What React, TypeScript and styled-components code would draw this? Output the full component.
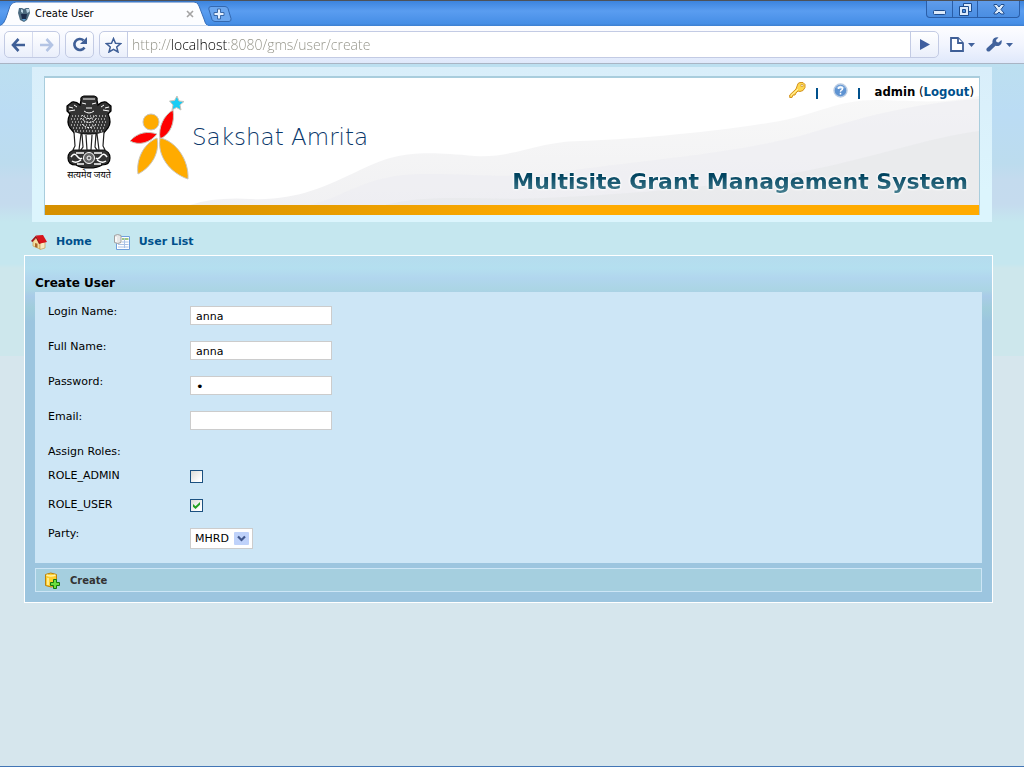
import React, { useState } from "react";
import styled, { createGlobalStyle } from "styled-components";

const GlobalStyle = createGlobalStyle`
  * { box-sizing: border-box; }
  body {
    margin: 0;
    font-family: Verdana, "DejaVu Sans", sans-serif;
    font-size: 11px;
    line-height: 16px;
    color: #000;
  }
  button, input, select { font: inherit; color: inherit; margin: 0; }
  svg { display: block; }
`;

const Window = styled.div`
  display: flex;
  flex-direction: column;
  min-height: 100vh;
  border-bottom: 1px solid #4275b5;
`;

/* Browser chrome */

const TitleBar = styled.header`
  display: flex;
  justify-content: space-between;
  height: 26px;
  border-top: 1px solid #4d5158;
  background: linear-gradient(#3c84dd, #5a9df0 40%, #468ee6 90%, #3d7fd0);
`;

const Tabs = styled.div`
  display: flex;
  align-items: flex-start;
`;

const Tab = styled.div`
  position: relative;
  display: flex;
  align-items: center;
  gap: 4px;
  width: 208px;
  height: 26px;
  padding: 0 14px 0 17px;
  font-family: Tahoma, "DejaVu Sans Condensed", sans-serif;
`;

const TabShape = styled.svg`
  position: absolute;
  inset: 0;
  z-index: 0;
`;

const TabTitle = styled.span`
  position: relative;
  flex: 1;
`;

const TabIcon = styled.span`
  position: relative;
`;

const PlainButton = styled.button`
  position: relative;
  display: flex;
  align-items: center;
  justify-content: center;
  padding: 0;
  border: 0;
  background: none;
`;

const NewTab = styled(PlainButton)`
  margin-top: 5px;
`;

const WindowControls = styled.div`
  display: flex;
  height: 17px;
  margin-right: 4px;
  border: 1px solid #2a5ea8;
  border-top: 0;
  border-radius: 0 0 4px 4px;
  background: linear-gradient(#5f9ceb, #4a8ee2);
`;

const ControlButton = styled(PlainButton)<{ $wide?: boolean }>`
  width: ${(p) => (p.$wide ? 42 : 25)}px;
  & + & { border-left: 1px solid #2a5ea8; }
`;

const Toolbar = styled.div`
  display: flex;
  align-items: center;
  height: 38px;
  padding: 0 6px 0 4px;
  background: linear-gradient(#fdfdff, #f2f5fe 50%, #dfe8fb);
  border-bottom: 1px solid #a9b4c4;
`;

const ButtonGroup = styled.div`
  display: flex;
  height: 27px;
  margin-right: 5px;
  border: 1px solid #c3cbe4;
  border-radius: 5px;
  background: linear-gradient(#fff, #eaeffb);
  overflow: hidden;
`;

const ToolButton = styled(PlainButton)<{ $ruled?: boolean }>`
  width: 27px;
  ${(p) => p.$ruled && "border-left: 1px solid #d5dbee;"}
`;

const AddressGroup = styled(ButtonGroup)`
  flex: 1;
`;

/* The host name is black, the rest of the address grey. */
const Address = styled.input`
  flex: 1;
  min-width: 0;
  padding: 0 4px;
  border: 0;
  border-left: 1px solid #c3cbe4;
  border-right: 1px solid #c3cbe4;
  outline: 0;
  font: 300 14px "Open Sans", Tahoma, sans-serif;
  color: transparent;
  caret-color: #000;
  background-image:
    linear-gradient(90deg, #8f8f84 43px, #000 43px, #000 99px, #8f8f84 99px),
    linear-gradient(#fff, #fff);
  background-clip: text, padding-box;
`;

const MenuButton = styled(PlainButton)`
  width: 37px;
  gap: 4px;
`;

/* Page */

const Page = styled.main`
  flex: 1;
  background: linear-gradient(
    #bcdff0 0, #bbdcf4 50px, #bcdcee 100px, #c4dbee 115px, #c5dbee 140px, #c5e7ef 158px, #c5e7ef 200px,
    #cde7ec 204px, #cde7ec 292px, #d6e6ed 292px
  );
`;

const HeaderFrame = styled.div`
  margin: 0 32px;
  padding: 11px 13px 7px;
  background: linear-gradient(#d9eefa, #dcf5fd 80%);
  border-top: 3px solid #bcdff0;
`;

const Banner = styled.div`
  position: relative;
  display: flex;
  justify-content: space-between;
  height: 137px;
  background: #fff;
  border-bottom: 10px solid;
  border-image: linear-gradient(90deg, #d69000, #d99400 15%, #ffab00 55%) 1;
  box-shadow: 0 -1px 0 1px #a9cddd;
`;

const Waves = styled.svg`
  position: absolute;
  inset: 0;
  width: 100%;
  height: 100%;
`;

const Brand = styled.div`
  position: relative;
  display: flex;
  padding: 17px 0 0 19px;
`;

const Emblem = styled.div`
  width: 50px;
  text-align: center;
  font: 400 9px/12px "Noto Sans", "DejaVu Sans", sans-serif;
  white-space: nowrap;
`;

const BrandFigure = styled.svg`
  margin-left: 16px;
`;

const BrandName = styled.span`
  padding-top: 28px;
  font: 200 23px/28px "DejaVu Sans Light", "DejaVu Sans", sans-serif;
  color: #0a386a;
`;

const BannerSide = styled.div`
  position: relative;
  display: flex;
  flex-direction: column;
  justify-content: space-between;
  align-items: flex-end;
  padding: 2px 5px 9px 0;
`;

const Account = styled.div`
  display: flex;
  align-items: center;
  height: 24px;
  font: 13px/16px "DejaVu Sans Condensed", Tahoma, sans-serif;
`;

const IconLink = styled.a`
  padding-bottom: 4px;
`;

const Divider = styled.span`
  width: 2px;
  height: 11px;
  margin: 2px 15px 0 10px;
  background: #00508c;
`;

const User = styled.span`
  white-space: pre;
`;

const Link = styled.a`
  color: #00508c;
  font-weight: 700;
  text-decoration: none;
`;

const SystemName = styled.h1`
  margin: 0;
  padding-right: 6px;
  font: 700 22px/28px "DejaVu Sans", Verdana, sans-serif;
  white-space: nowrap;
  color: transparent;
  background: linear-gradient(#00435f 25%, #4d8494 95%);
  background-clip: text;
  filter: drop-shadow(0 0 1px #fff) drop-shadow(0 0 1px #fff);
`;

const Nav = styled.nav`
  display: flex;
  gap: 22px;
  height: 33px;
  padding: 6px 31px 0;
  align-items: center;
`;

const NavLink = styled(Link)`
  display: flex;
  align-items: center;
  gap: 9px;
`;

const Panel = styled.form`
  margin: 0 31px 0 24px;
  padding: 0 10px 10px;
  border: 1px solid #fff;
  background: linear-gradient(#b5dcee, #b4dfef 12px, #b1d6ee 22px, #abd5e4 34px, #a9cbe8 40px, #a0cddb 52px, #9cc5df 66px);
`;

const PanelTitle = styled.h2`
  margin: 0;
  padding: 19px 0 1px;
  font-size: 12px;
  line-height: 16px;
`;

const Fields = styled.div`
  padding: 12px 13px 0;
  background: #cde6f6;
`;

const Row = styled.div<{ $height: number }>`
  display: grid;
  grid-template-columns: 142px 1fr;
  align-items: start;
  justify-items: start;
  min-height: ${(p) => p.$height}px;
`;

const Field = styled.div`
  position: relative;
  margin-top: 2px;
`;

const TextInput = styled.input`
  display: block;
  width: 142px;
  height: 19px;
  padding: 1px 5px 0;
  border: 1px solid #ccc;
  background: #fff;
  outline: 0;
`;

const PasswordInput = styled(TextInput)`
  font-size: 13px;
`;

const Check = styled.input`
  appearance: none;
  display: block;
  width: 13px;
  height: 13px;
  border: 1px solid #1c5180;
  background: linear-gradient(135deg, #dcdcd7, #fff 80%);
  &:checked::after {
    content: "";
    display: block;
    width: 7px;
    height: 7px;
    margin: 2px;
    background: #21a121;
    clip-path: polygon(0 28%, 36% 62%, 100% 0, 100% 40%, 36% 100%, 0 68%);
  }
`;

const Select = styled.select`
  appearance: none;
  display: block;
  width: 63px;
  height: 21px;
  padding: 1px 20px 0 4px;
  border: 1px solid #ccc;
  border-radius: 0;
  background: #fff;
`;

const SelectArrow = styled.svg`
  position: absolute;
  top: 4px;
  right: 4px;
  pointer-events: none;
`;

const Actions = styled.div`
  display: flex;
  margin-top: 5px;
  height: 24px;
  padding-left: 8px;
  border: 1px solid #cde6f6;
  background: #a5cfdf;
`;

const CreateButton = styled(PlainButton)`
  gap: 9px;
  padding-top: 1px;
  font-size: 10px;
  font-weight: 700;
  color: #333;
`;

function Arrow({ color, back }: { color: string; back?: boolean }) {
  return (
    <svg width="15" height="14" viewBox="0 0 15 14" fill="none" stroke={color} strokeWidth="2.6">
      {back ? <path d="M7.5 1 2 7l5.500 6M2.500 7H14" /> : <path d="M7.500 1 13 7l-5.500 6M12.500 7H1" />}
    </svg>
  );
}

function Caret() {
  return (
    <svg width="7" height="4" viewBox="0 0 7 4"><path d="M0 0h7L3.500 4z" fill="#41629c" /></svg>
  );
}

function EmblemDrawing() {
  return (
    <svg width="50" height="74" viewBox="0 0 50 74">
      <g fill="#333" stroke="#000" strokeWidth="1.200">
        <path d="M17 5q-1-3 3-4h10q4 1 3 4l1 5q4-4 8-3l5 4v5l-3 3q4 8 0 14l-5 6H11l-5-6q-4-6 0-14l-3-3v-5l5-4q4-1 8 3z" />
        <path d="M4 63q0-7 7-8h28q7 1 7 8t-8 7q-4 3-13 3t-13-3q-8 0-8-7z" />
      </g>
      <g stroke="#fff" fill="none" strokeWidth="1">
        <path d="M19 4h12M18 8l4 1m6 0 4-1M22 13h6M20 16q5 4 10 0M5 12l4 1M5 16l6-1M41 13l4-1M39 15l6 1M10 10l3 2M40 10l-3 2" />
        <path strokeDasharray="1 2" d="M8 21h34M7 24h36M8 27h34M7 30h36M9 33h32M10 36h30" />
        <path strokeDasharray="2 1" d="M18 20q7 7 14 0M17 23q8 9 16 0M18 29q7 7 14 0" />
        <circle cx="25" cy="63" r="5.500" fill="#666" /><circle cx="25" cy="63" r="2" />
        <path d="M7 62q3-5 6-1t5 2M8 66q4 3 9-1M43 62q-3-5-6-1t-5 2M42 66q-4 3-9-1M12 58h8M30 58h8M13 69h7M30 69h7" strokeWidth="1.500" />
      </g>
      <g fill="#fff" stroke="#222" strokeWidth="1.200">
        <path d="M10 37l1 14-2 4h6l2-16M18 39l1 13-2 3h6l-1-15M28 40l-1 15h6l-2-3 1-13M33 39l2 16h6l-2-4 1-14" />
      </g>
    </svg>
  );
}

function TextRow(props: { id: string; label: string; value?: string; password?: boolean }) {
  const Input = props.password ? PasswordInput : TextInput;
  return (
    <Row $height={35}>
      <label htmlFor={props.id}>{props.label}</label>
      <Field>
        <Input id={props.id} type={props.password ? "password" : "text"} defaultValue={props.value} />
      </Field>
    </Row>
  );
}

function RoleRow({ id, initial }: { id: string; initial: boolean }) {
  const [checked, setChecked] = useState(initial);
  return (
    <Row $height={29}>
      <label htmlFor={id}>{id}</label>
      <Field>
        <Check id={id} type="checkbox" checked={checked} onChange={(e) => setChecked(e.target.checked)} />
      </Field>
    </Row>
  );
}

function BrowserChrome() {
  return (
    <>
      <TitleBar>
        <Tabs>
          <Tab>
            <TabShape width="208" height="25" viewBox="0 0 208 25">
              <path d="M0 25Q4 23 6 17L10 5q2-4 6-4h178q4 0 5 4l5 13q1 5 4 7z" fill="#fcfdff" stroke="#3a6fb8" strokeWidth="1" />
              <path d="M1 24.500h207V25H0z" fill="#fcfdff" />
            </TabShape>
            <TabIcon>
              <svg width="14" height="15" viewBox="0 0 14 15">
                <path d="M2 1h3l2 1 2-1h3l1 5-3 7-3 2-4-2-2-7z" fill="#4b6a80" />
                <path d="M4 2v3l2 1V3zM9 2l1 4 2-1V2z" fill="#b9d3e4" />
                <path d="M4 7h6l-1 5H5z" fill="#1b2c4c" /><path d="M5 12h4l-2 2z" fill="#5aa0d8" />
              </svg>
            </TabIcon>
            <TabTitle>Create User</TabTitle>
            <PlainButton aria-label="Close tab">
              <svg width="8" height="8" viewBox="0 0 8 8"><path d="M1 1l6 6M7 1 1 7" stroke="#a3a3a3" strokeWidth="1.600" /></svg>
            </PlainButton>
          </Tab>
          <NewTab aria-label="New tab">
            <svg width="24" height="16" viewBox="0 0 24 16">
              <path d="M3 .5h14q2 0 3 2l3 10q.5 3-2 3H7q-2 0-3-2L.8 3Q.5.500 3 .500z" fill="#6ba6ee" stroke="#3368b0" />
              <path d="M9.500 3h3v3.500H16v3h-3.500V13h-3V9.500H6v-3h3.500z" fill="#e6f0fc" stroke="#3968a8" />
            </svg>
          </NewTab>
        </Tabs>
        <WindowControls>
          <ControlButton aria-label="Minimize">
            <svg width="13" height="12" viewBox="0 0 13 12"><rect x=".5" y="7.500" width="12" height="4" rx="1" fill="#dceafa" stroke="#1e4d8f" /></svg>
          </ControlButton>
          <ControlButton aria-label="Restore">
            <svg width="13" height="13" viewBox="0 0 13 13" fill="#dceafa" stroke="#1e4d8f">
              <path d="M4.500.500h8v8h-8z" /><path d="M.5 3.500h9v9h-9z" /><path d="M3.500 6.500h3v3h-3z" fill="#4a8ee2" />
            </svg>
          </ControlButton>
          <ControlButton aria-label="Close" $wide>
            <svg width="12" height="11" viewBox="0 0 12 11">
              <path d="M1 .5h3l2 2.500L8 .5h3v1L8 5.500l3 3.500v1H8L6 8l-2 2H1V9l3-3.500-3-4z" fill="#dceafa" stroke="#1e4d8f" />
            </svg>
          </ControlButton>
        </WindowControls>
      </TitleBar>
      <Toolbar>
        <ButtonGroup>
          <ToolButton aria-label="Back"><Arrow back color="#3f5f97" /></ToolButton>
          <ToolButton aria-label="Forward" $ruled><Arrow color="#b3c4e4" /></ToolButton>
        </ButtonGroup>
        <ButtonGroup>
          <ToolButton aria-label="Reload">
            <svg width="16" height="15" viewBox="0 0 16 15">
              <path d="M12.500 10.500A5.500 5.500 0 1 1 11.500 3.300" fill="none" stroke="#3f5f97" strokeWidth="2.600" />
              <path d="M15 0v7H8z" fill="#3f5f97" />
            </svg>
          </ToolButton>
        </ButtonGroup>
        <AddressGroup>
          <ToolButton aria-label="Bookmark this page">
            <svg width="17" height="16" viewBox="0 0 17 16">
              <path d="M8.500 1.500l2 4.700 5.200.4-4 3.400 1.300 5-4.500-2.700L4 15l1.300-5-4-3.400 5.200-.4z" fill="#f7f9fe" stroke="#3f5f97" strokeWidth="1.500" />
            </svg>
          </ToolButton>
          <Address aria-label="Address" defaultValue="http://localhost:8080/gms/user/create" />
          <ToolButton aria-label="Go">
            <svg width="10" height="11" viewBox="0 0 10 11"><path d="M0 0v11l10-5.500z" fill="#3f5f9f" /></svg>
          </ToolButton>
        </AddressGroup>
        <MenuButton aria-label="Page menu">
          <svg width="14" height="15" viewBox="0 0 14 15" fill="#fff" stroke="#3f5f97" strokeWidth="1.800">
            <path d="M1 1h7l5 5v8H1z" /><path d="M8 1v5h5" />
          </svg>
          <Caret />
        </MenuButton>
        <MenuButton aria-label="Tools menu">
          <svg width="16" height="15" viewBox="0 0 16 15">
            <path d="M12.500.500 10 3l.5 2 2 .5L15.500 3q1 4-2 5.500-2 1-4 .2L4 14q-1.500 1.200-3 0-1.300-1.500 0-3l5.500-5Q6 3 8 1.300 10 0 12.500.500z" fill="#41629c" />
          </svg>
          <Caret />
        </MenuButton>
      </Toolbar>
    </>
  );
}

export default function App() {
  return (
    <Window>
      <GlobalStyle />
      <BrowserChrome />
      <Page>
        <HeaderFrame>
          <Banner>
            <Waves viewBox="0 0 934 127" preserveAspectRatio="none">
              <defs>
                <linearGradient id="haze" x1="0" x2="0" y1="0" y2="1">
                  <stop offset="0" stopColor="#f8f8f8" /><stop offset="1" stopColor="#f1f1f3" />
                </linearGradient>
              </defs>
              <path d="M145 127q25-8 60-6c45 2 75-12 110-29s55-20 115-14c40 2 60-14 105-15s130-8 200-20c40-8 60-22 100-21s60 4 99-4v109z" fill="url(#haze)" />
              <path d="M265 127c35-8 55-30 110-31s95 6 150-3 170-17 240-38 110-30 169-34v106z" fill="#ececf2" opacity=".6" />
              <path d="M340 127c50-12 90-4 160-7s170-10 250-25 130-35 184-42v74z" fill="#e6e7e9" opacity=".6" />
            </Waves>
            <Brand>
              <Emblem>
                <EmblemDrawing />
                सत्यमेव जयते
              </Emblem>
              <BrandFigure width="62" height="86" viewBox="0 0 62 86" stroke="#c9c5bc" strokeWidth="1">
                <path d="M47 1l2 5 5 .5-4 3.500 1 5-4.500-2.500L42 15l1-5-3.500-4 5-.5z" fill="#19cdf5" />
                <circle cx="21" cy="27" r="8" fill="#ffab00" />
                <path d="M43 15c2 12-2 24-13 29-2-12 4-24 13-29z" fill="#f00" />
                <path d="M0 46c8-9 18-10 27-7-7 9-18 12-27 7z" fill="#f00" />
                <path d="M27 43c3 14-5 29-19 36-2-14 5-30 19-36z" fill="#ffab00" />
                <path d="M30 43c16 3 29 22 28 41-18-6-31-23-28-41z" fill="#ffab00" />
              </BrandFigure>
              <BrandName>Sakshat Amrita</BrandName>
            </Brand>
            <BannerSide>
              <Account>
                <IconLink href="#password" aria-label="Change password">
                  <svg width="17" height="17" viewBox="0 0 17 17">
                    <path d="M9 1.500l2-1h3l2 2v3l-2 3-3 1-2-.5-2 2-1 2H4l-1 2.500H.7V13L7 7z" fill="#ffd84f" stroke="#d39320" />
                    <path d="M12 2.500h2v2h-2z" fill="#fff" stroke="#c58a1c" strokeWidth=".6" /><path d="M2 13.500 9 7" stroke="#fff2b0" />
                  </svg>
                </IconLink>
                <Divider />
                <IconLink href="#help" aria-label="Help">
                  <svg width="15" height="15" viewBox="0 0 15 15">
                    <circle cx="7.500" cy="7.500" r="6.500" fill="#5e93d2" stroke="#b9cbe2" strokeWidth="1.400" />
                    <path d="M3 5q4-5 9 0-4 2-9 0z" fill="#a3c4ea" />
                    <path d="M5.500 6q0-2 2-2t2 1.700q0 1-1 1.500t-1 1.500M7.500 9.800v1.700" fill="none" stroke="#fff" strokeWidth="1.500" />
                  </svg>
                </IconLink>
                <Divider />
                <User><b>admin</b> (<Link href="#logout">Logout</Link>)</User>
              </Account>
              <SystemName>Multisite Grant Management System</SystemName>
            </BannerSide>
          </Banner>
        </HeaderFrame>
        <Nav>
          <NavLink href="#home">
            <svg width="16" height="16" viewBox="0 0 16 16">
              <path d="M2 7l4-3 3 5v6l-7-3z" fill="#f5dfa0" stroke="#c69b52" strokeWidth=".7" />
              <path d="M9 9l5-1v6l-5 1.500z" fill="#f8e9c0" stroke="#c69b52" strokeWidth=".7" />
              <path d="M5 1.500 12 1l4 7-7 1.500z" fill="#d8141b" /><path d="M5 1.500 0 7l1.500 1L5 4l3 6 1.500-.5z" fill="#9e1015" />
              <path d="M4 9l2.500.8v4L4 13z" fill="#a86a2c" />
            </svg>
            Home
          </NavLink>
          <NavLink href="#users">
            <svg width="16" height="16" viewBox="0 0 16 16">
              <path d="M2.500 2.500h13v13h-13z" fill="#fff" stroke="#6f9fdc" />
              <path d="M8 4h6.500v2H8z" fill="#9fc983" />
              <path d="M8 8h6.500M4 10.500h10.500M4 13h10.500M10.500 4v10" stroke="#a9c2e6" />
              <path d="M.5 1.500q3-2 6.500 0v7q-3 2-6.500 0z" fill="#e8e8e8" stroke="#a0a0a0" /><path d="M2 3v5" stroke="#fff" strokeWidth="1.500" />
            </svg>
            User List
          </NavLink>
        </Nav>
        <Panel onSubmit={(e) => e.preventDefault()}>
          <PanelTitle>Create User</PanelTitle>
          <Fields>
            <TextRow id="login" label="Login Name:" value="anna" />
            <TextRow id="name" label="Full Name:" value="anna" />
            <TextRow id="secret" label="Password:" value="a" password />
            <TextRow id="email" label="Email:" />
            <Row $height={24}>Assign Roles:</Row>
            <RoleRow id="ROLE_ADMIN" initial={false} />
            <RoleRow id="ROLE_USER" initial />
            <Row $height={37}>
              <label htmlFor="party">Party:</label>
              <Field>
                <Select id="party"><option>MHRD</option></Select>
                <SelectArrow width="15" height="13" viewBox="0 0 15 13">
                  <rect width="15" height="13" rx="1" fill="#bfd2fa" />
                  <path d="M4 4.500l3.500 3.500L11 4.500" fill="none" stroke="#40578c" strokeWidth="2.200" />
                </SelectArrow>
              </Field>
            </Row>
          </Fields>
          <Actions>
            <CreateButton type="submit">
              <svg width="17" height="17" viewBox="0 0 17 17">
                <path d="M1.500 2.500q5-3 11 0v11q-5 3-11 0z" fill="#ffce2e" stroke="#b9810f" />
                <path d="M2.500 3q4 2 9 0" fill="none" stroke="#fff3a8" strokeWidth="1.400" /><path d="M4 6v7" stroke="#ffec8c" strokeWidth="2" />
                <path d="M9.500 7.500h3v3h3v3h-3v3h-3v-3h-3v-3h3z" fill="#6ade3f" stroke="#14780f" />
              </svg>
              Create
            </CreateButton>
          </Actions>
        </Panel>
      </Page>
    </Window>
  );
}
